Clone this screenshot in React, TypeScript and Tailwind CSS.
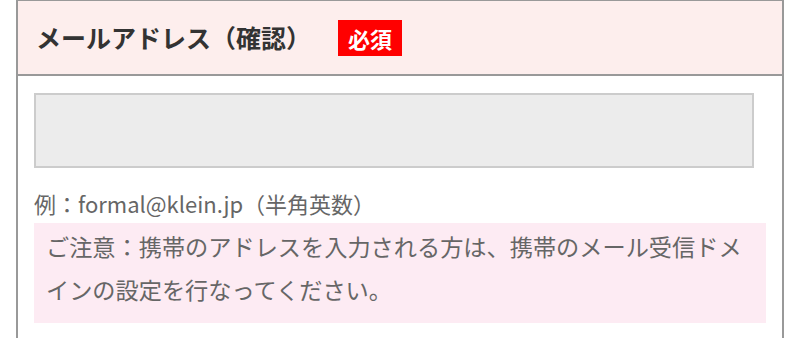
export default function App() {
  return (
    <div
      className="w-[800px] h-[338px] overflow-hidden bg-white"
      style={{ fontFamily: '"Noto Sans CJK JP", "Noto Sans", sans-serif' }}
    >
      <div className="ml-[16px] w-[768px] border-x-2 border-t border-[#999999] h-[400px]">
        <div className="h-[75px] bg-[#fdeeed] border-b-2 border-[#999999] flex items-center pl-[18px]">
          <h3 className="text-[25px] font-bold text-[#333333] leading-none">
            メールアドレス（確認）
          </h3>
          <span className="ml-[27px] w-[64px] h-[36px] bg-[#ff0000] text-white font-bold text-[22px] flex items-center justify-center leading-none">
            必須
          </span>
        </div>
        <div className="pl-[16px] pt-[17px]">
          <input
            type="text"
            className="block w-[720px] h-[75px] bg-[#ececec] border-2 border-[#cccccc] outline-none"
          />
          <p className="mt-[20px] text-[22px] leading-[30px] text-[#666666]">
            例：formal@klein.jp（半角英数）
          </p>
          <div className="mt-[5px] w-[732px] bg-[#fdebf3] px-[12px] pt-[2px] pb-[12px]">
            <p className="text-[23.2px] leading-[43px] text-[#666666]">
              ご注意：携帯のアドレスを入力される方は、携帯のメール受信ドメインの設定を行なってください。
            </p>
          </div>
        </div>
      </div>
    </div>
  );
}
